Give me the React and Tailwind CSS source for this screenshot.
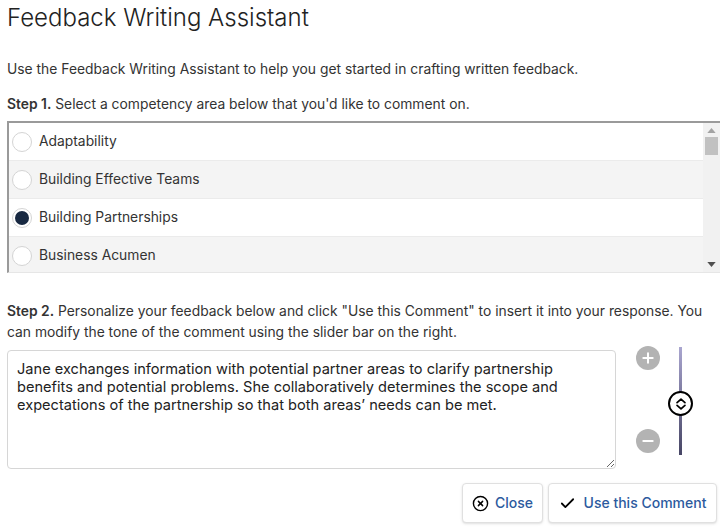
import React, { useState } from 'react';
import { CircleX, Check, Plus, Minus } from 'lucide-react';

const areas = [
  'Adaptability',
  'Building Effective Teams',
  'Building Partnerships',
  'Business Acumen',
  'Coaching',
  'Communication',
  'Customer Focus',
  'Decision Making',
];

const Radio = ({ checked }) => (
  <span className="w-5 h-5 rounded-full border border-[#d4d4d4] bg-white flex items-center justify-center shrink-0">
    {checked && <span className="w-[14px] h-[14px] rounded-full bg-[#172841]" />}
  </span>
);

const App = () => {
  const [selected, setSelected] = useState('Building Partnerships');
  const [text, setText] = useState(
    "Jane exchanges information with potential partner areas to clarify partnership benefits and potential problems. She collaboratively determines the scope and expectations of the partnership so that both areas\u2019 needs can be met."
  );

  return (
    <div className="w-[722px] h-[529px] bg-white pl-[7px] pr-[2px] text-[#333] font-['Inter',sans-serif] overflow-hidden">
      <h1 className="text-[24px] leading-[30px] font-light text-[#222] pt-[3px]">Feedback Writing Assistant</h1>

      <p className="text-[13.85px] leading-5 mt-[26px]">
        Use the Feedback Writing Assistant to help you get started in crafting written feedback.
      </p>

      <p className="text-[13.85px] leading-5 mt-[15px]">
        <span className="font-semibold">Step 1.</span> Select a competency area below that you'd like to comment on.
      </p>

      <div className="mt-[7px] h-[152px] flex border-t-2 border-l-2 border-[#9a9a9a] border-b border-b-[#e6e6e6]">
        <div className="flex-1 overflow-hidden">
          {areas.map((a, i) => (
            <label
              key={a}
              onClick={() => setSelected(a)}
              className={`flex items-center gap-[7px] h-[38px] pl-[3px] text-[13.85px] cursor-pointer border-b border-[#ebebeb] ${i % 2 ? 'bg-[#f4f4f4]' : 'bg-white'}`}
            >
              <Radio checked={selected === a} />
              <span>{a}</span>
            </label>
          ))}
        </div>
        <div className="w-[17px] bg-[#f1f1f1] flex flex-col items-center">
          <svg viewBox="0 0 10 6" className="w-[9px] h-[5px] mt-[5px]" fill="#a3a3a3">
            <path d="M0 6 L5 0 L10 6 Z" />
          </svg>
          <div className="w-[13px] h-[18px] bg-[#c1c1c1] mt-[4px]" />
          <div className="flex-1" />
          <svg viewBox="0 0 10 6" className="w-[9px] h-[5px] mb-[5px]" fill="#505050">
            <path d="M0 0 L10 0 L5 6 Z" />
          </svg>
        </div>
      </div>

      <p className="text-[13.85px] leading-[21px] mt-[28px]">
        <span className="font-semibold">Step 2.</span> Personalize your feedback below and click "Use this Comment" to insert it into your response. You can modify the tone of the comment using the slider bar on the right.
      </p>

      <div className="flex mt-[7px]">
        <textarea
          value={text}
          onChange={(e) => setText(e.target.value)}
          className="w-[609px] h-[119px] rounded border border-[#d6d6d6] pl-[9px] pr-2 pt-[9px] text-[14.6px] leading-[18px] text-[#222] outline-none resize"
        />
        <div className="relative w-[100px]">
          <button className="absolute left-[20px] top-[-4px] w-6 h-6 rounded-full bg-[#b3b3b3] flex items-center justify-center">
            <Plus className="w-4 h-4 text-white" strokeWidth={3} />
          </button>
          <button className="absolute left-[20px] top-[79px] w-6 h-6 rounded-full bg-[#b3b3b3] flex items-center justify-center">
            <Minus className="w-4 h-4 text-white" strokeWidth={3} />
          </button>
          <div className="absolute left-[63px] top-[-3px] w-[3px] h-[108px] bg-gradient-to-b from-[#aaa6d0] to-[#474665]" />
          <div className="absolute left-[52px] top-[41px] w-[25px] h-[25px] rounded-full bg-white border-2 border-black flex items-center justify-center">
            <svg viewBox="0 0 16 16" className="w-[14px] h-[14px]" fill="none" stroke="black" strokeWidth="2" strokeLinecap="round" strokeLinejoin="round">
              <path d="M3.5 6.5 L8 2.5 L12.5 6.5" />
              <path d="M3.5 9.5 L8 13.5 L12.5 9.5" />
            </svg>
          </div>
        </div>
      </div>

      <div className="flex justify-end gap-[5px] mt-[14px] pr-[3px]">
        <button className="w-[81px] h-10 flex items-center justify-center gap-[6px] rounded border border-[#e0e0e0] bg-white shadow-sm text-sm font-medium text-[#2c5a9e]">
          <CircleX className="w-[17px] h-[17px] text-black" strokeWidth={2} />
          Close
        </button>
        <button className="w-[169px] h-10 flex items-center justify-center gap-[8px] rounded border border-[#e0e0e0] bg-white shadow-sm text-sm font-medium text-[#2c5a9e]">
          <Check className="w-[17px] h-[17px] text-black" strokeWidth={2.5} />
          Use this Comment
        </button>
      </div>
    </div>
  );
};

export default App;
